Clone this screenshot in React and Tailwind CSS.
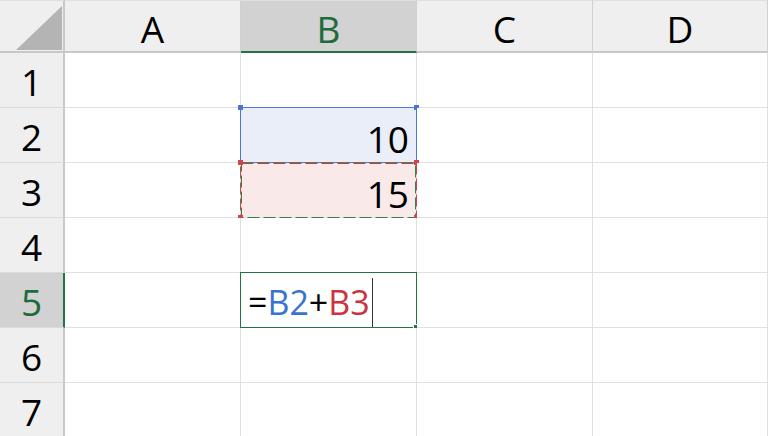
const cols = ["A", "B", "C", "D"];
const rows = [1, 2, 3, 4, 5, 6, 7];

const font = { fontFamily: '"Open Sans", "Noto Sans", sans-serif' };

function Corner({ className }) {
  return <span className={`absolute w-[5px] h-[5px] ${className}`} />;
}

function DataCell({ col, row }) {
  const base = "relative border-r border-b border-[#e1e1e1] flex items-center";

  if (col === "B" && row === 2) {
    return (
      <div className={`${base} bg-[#e9eef9] justify-end pr-[7px]`}>
        <span className="text-[37px] leading-none text-black translate-y-[3px]">10</span>
        <div className="absolute -inset-px border border-[#4a78d0]" />
        <Corner className="-left-[3px] -top-[3px] bg-[#4a78d0]" />
        <Corner className="-right-[3px] -top-[3px] bg-[#4a78d0]" />
      </div>
    );
  }
  if (col === "B" && row === 3) {
    return (
      <div className={`${base} bg-[#f9e9e9] justify-end pr-[7px]`}>
        <span className="text-[37px] leading-none text-black translate-y-[3px]">15</span>
        <svg className="absolute -left-px -top-px w-[177px] h-[57px] overflow-visible" viewBox="0 0 177 57">
          <rect x="0.5" y="0.5" width="176" height="56" fill="none" stroke="#d0454c" strokeWidth="1" strokeDasharray="12 4" />
          <rect x="1.5" y="1.5" width="174" height="54" fill="none" stroke="#3f7a4a" strokeWidth="1" strokeDasharray="12 4" />
        </svg>
        <Corner className="-left-[3px] -top-[3px] bg-[#d0454c]" />
        <Corner className="-right-[3px] -top-[3px] bg-[#d0454c]" />
        <Corner className="-left-[3px] -bottom-[3px] bg-[#d0454c]" />
        <Corner className="-right-[3px] -bottom-[3px] bg-[#d0454c]" />
      </div>
    );
  }
  if (col === "B" && row === 5) {
    return (
      <div className={`${base} bg-white pl-[7px]`}>
        <span className="text-[34px] leading-none translate-y-[2px] flex items-center">
          <span className="text-black">=</span>
          <span className="text-[#3a72d0]">B2</span>
          <span className="text-black">+</span>
          <span className="text-[#cc3340]">B3</span>
          <span className="ml-[2px] w-px h-[49px] bg-[#333]" />
        </span>
        <div className="absolute -inset-px border border-[#217346]" />
        <span className="absolute -right-[3px] -bottom-[3px] w-[6px] h-[6px] bg-[#217346] border border-white" />
      </div>
    );
  }
  return <div className={`${base} bg-white`} />;
}

export default function App() {
  return (
    <div
      className="w-[768px] h-[436px] overflow-hidden bg-white grid grid-cols-[65px_176px_176px_176px_1fr] grid-rows-[53px_repeat(7,55px)]"
      style={font}
    >
      <div className="relative bg-[#efefef] border-t border-[#e0e0e0] border-r-2 border-b-2 border-r-[#c8c8c8] border-b-[#c8c8c8]">
        <svg className="absolute left-0 top-0" width="63" height="50" viewBox="0 0 63 50">
          <polygon points="16,49 62,49 62,5" fill="#b4b4b4" />
        </svg>
      </div>
      {cols.map((c) => {
        const sel = c === "B";
        return (
          <div
            key={c}
            className={`flex items-center justify-center border-t border-[#e0e0e0] border-r border-r-[#d0d0d0] border-b-2 ${
              sel ? "bg-[#d2d2d2] border-b-[#217346] text-[#1e6b3b]" : "bg-[#efefef] border-b-[#c8c8c8] text-black"
            }`}
          >
            <span className="text-[37px] leading-none translate-y-[2px]">{c}</span>
          </div>
        );
      })}
      {rows.map((r) => {
        const sel = r === 5;
        return [
          <div
            key={`h${r}`}
            className={`flex items-center justify-center border-b border-b-[#dadada] border-r-2 ${
              sel ? "bg-[#d2d2d2] border-r-[#217346] text-[#1e6b3b]" : "bg-[#efefef] border-r-[#c8c8c8] text-black"
            }`}
          >
            <span className="text-[37px] leading-none translate-y-[1px]">{r}</span>
          </div>,
          ...cols.map((c) => <DataCell key={`${c}${r}`} col={c} row={r} />),
        ];
      })}
    </div>
  );
}
